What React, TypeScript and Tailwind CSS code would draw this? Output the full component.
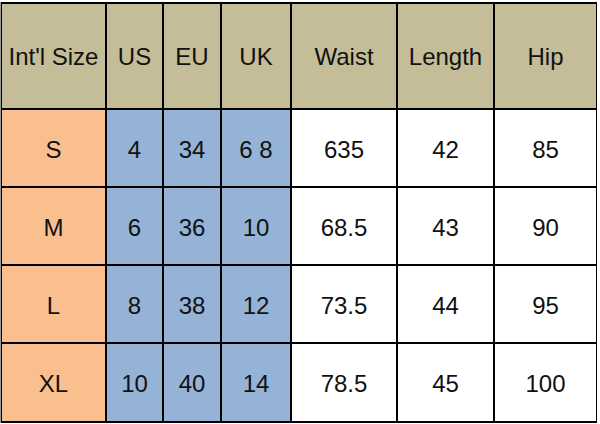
const headers = ["Int'l Size", "US", "EU", "UK", "Waist", "Length", "Hip"];

const rows = [
  ["S", "4", "34", "6 8", "635", "42", "85"],
  ["M", "6", "36", "10", "68.5", "43", "90"],
  ["L", "8", "38", "12", "73.5", "44", "95"],
  ["XL", "10", "40", "14", "78.5", "45", "100"],
];

function cellColor(col: number) {
  if (col === 0) return "bg-[#fabf8f]";
  if (col <= 3) return "bg-[#95b3d7]";
  return "bg-white";
}

export default function App() {
  return (
    <div
      className="w-[600px] h-[424px] bg-white pt-[2px] overflow-hidden"
      style={{ fontFamily: '"Liberation Sans", Arial, sans-serif' }}>
      <div className="w-[597px] grid grid-cols-[103px_55px_56px_68px_104px_95px_101px] grid-rows-[104px_76px_76px_76px_77px] gap-[2px] bg-black pt-[2px] pb-[2px] pl-[1px] pr-[2px] border-l border-[#9a9a9a]">
        {headers.map((h) => (
          <div
            key={h}
            className="bg-[#c4bd97] flex items-center justify-center pt-[2px] text-[24px] text-[#111] whitespace-nowrap">
            {h}
          </div>
        ))}
        {rows.map((row, r) =>
          row.map((v, c) => (
            <div
              key={`${r}-${c}`}
              className={`${cellColor(c)} flex items-center justify-center pt-[3px] text-[24px] text-[#111] whitespace-nowrap`}>
              {v}
            </div>
          ))
        )}
      </div>
    </div>
  );
}
